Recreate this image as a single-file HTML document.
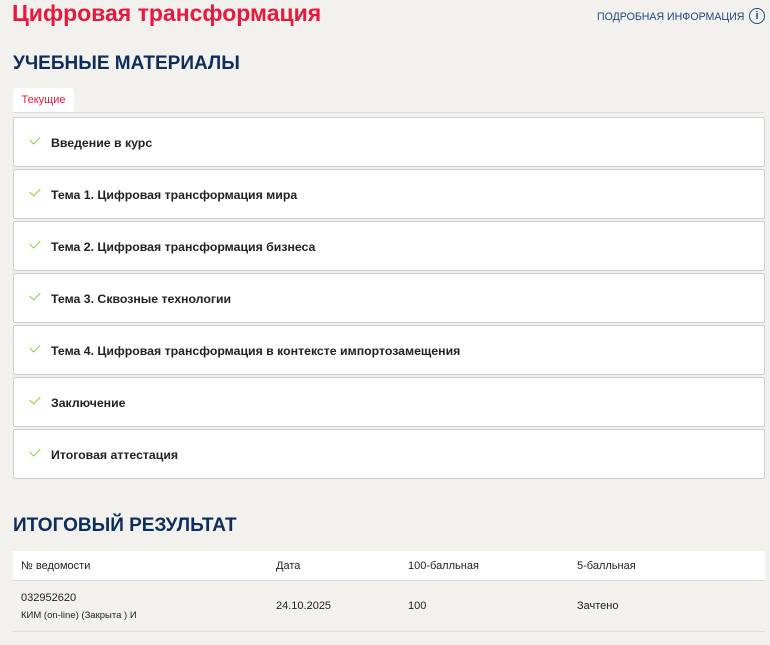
<!DOCTYPE html>
<html><head><meta charset="utf-8"><style>
body{margin:0;background:#f2f1ee;font-family:"Liberation Sans","Noto Sans CJK SC",sans-serif;width:770px;height:645px;overflow:hidden;position:relative}
.t{position:absolute;left:12px;top:0px;font-size:23px;font-weight:bold;color:#e8193c;white-space:nowrap;transform:scaleX(1.0);transform-origin:left}
.info{position:absolute;left:597px;top:11px;font-size:10.8px;color:#1a4a80;white-space:nowrap;transform:scaleX(0.98);transform-origin:left}
.ic{position:absolute;left:749px;top:8px;width:14px;height:14px;border:1.5px solid #1a4a80;border-radius:50%;color:#1a4a80;font-size:11px;font-weight:bold;text-align:center;line-height:14px}
h2{position:absolute;left:13px;margin:0;font-size:19px;color:#0d2d5e;font-weight:bold;white-space:nowrap}
.tab{position:absolute;left:13px;top:88px;width:61px;height:24px;background:#fff;border-radius:3px 3px 0 0;font-size:11px;color:#e8193c;line-height:24px;text-align:center}
.line{position:absolute;left:13px;top:112px;width:752px;height:1px;background:#ddd}
.it{position:absolute;left:13px;width:750px;height:48px;background:#fff;border:1px solid #cfcfcf;border-radius:2px;font-size:12.3px;font-weight:bold;color:#222;line-height:50px}
.it span{position:absolute;left:37px}
.it i{position:absolute;left:16px;top:18px;width:9px;height:5px;border-left:1.5px solid #8cc63f;border-bottom:1.5px solid #8cc63f;transform:rotate(-45deg)}
.tbl{position:absolute;left:13px;top:551px;width:752px;font-size:11px;color:#222}
.th{height:29px;background:#fff;border-bottom:1px solid #ddd;position:relative}
.tr{height:50px;border-bottom:1px solid #ddd;position:relative}
.c{position:absolute;white-space:nowrap}
</style></head><body>
<div class="t">Цифровая трансформация</div>
<div class="info">ПОДРОБНАЯ ИНФОРМАЦИЯ</div><div class="ic">i</div>
<h2 style="top:53px">УЧЕБНЫЕ МАТЕРИАЛЫ</h2>
<div class="tab">Текущие</div><div class="line"></div>
<div class="it" style="top:117px"><i></i><span>Введение в курс</span></div>
<div class="it" style="top:169px"><i></i><span>Тема 1. Цифровая трансформация мира</span></div>
<div class="it" style="top:221px"><i></i><span>Тема 2. Цифровая трансформация бизнеса</span></div>
<div class="it" style="top:273px"><i></i><span>Тема 3. Сквозные технологии</span></div>
<div class="it" style="top:325px"><i></i><span>Тема 4. Цифровая трансформация в контексте импортозамещения</span></div>
<div class="it" style="top:377px"><i></i><span>Заключение</span></div>
<div class="it" style="top:429px"><i></i><span>Итоговая аттестация</span></div>
<h2 style="top:515px">ИТОГОВЫЙ РЕЗУЛЬТАТ</h2>
<div class="tbl">
<div class="th"><span class="c" style="left:8px;top:9px">№ ведомости</span><span class="c" style="left:263px;top:9px">Дата</span><span class="c" style="left:395px;top:9px">100-балльная</span><span class="c" style="left:564px;top:9px">5-балльная</span></div>
<div class="tr"><span class="c" style="left:8px;top:11px">032952620</span><span class="c" style="left:8px;top:29px;font-size:9.5px">КИМ (on-line) (Закрыта ) И</span><span class="c" style="left:263px;top:19px">24.10.2025</span><span class="c" style="left:395px;top:19px">100</span><span class="c" style="left:564px;top:19px">Зачтено</span></div>
</div>
</body></html>
